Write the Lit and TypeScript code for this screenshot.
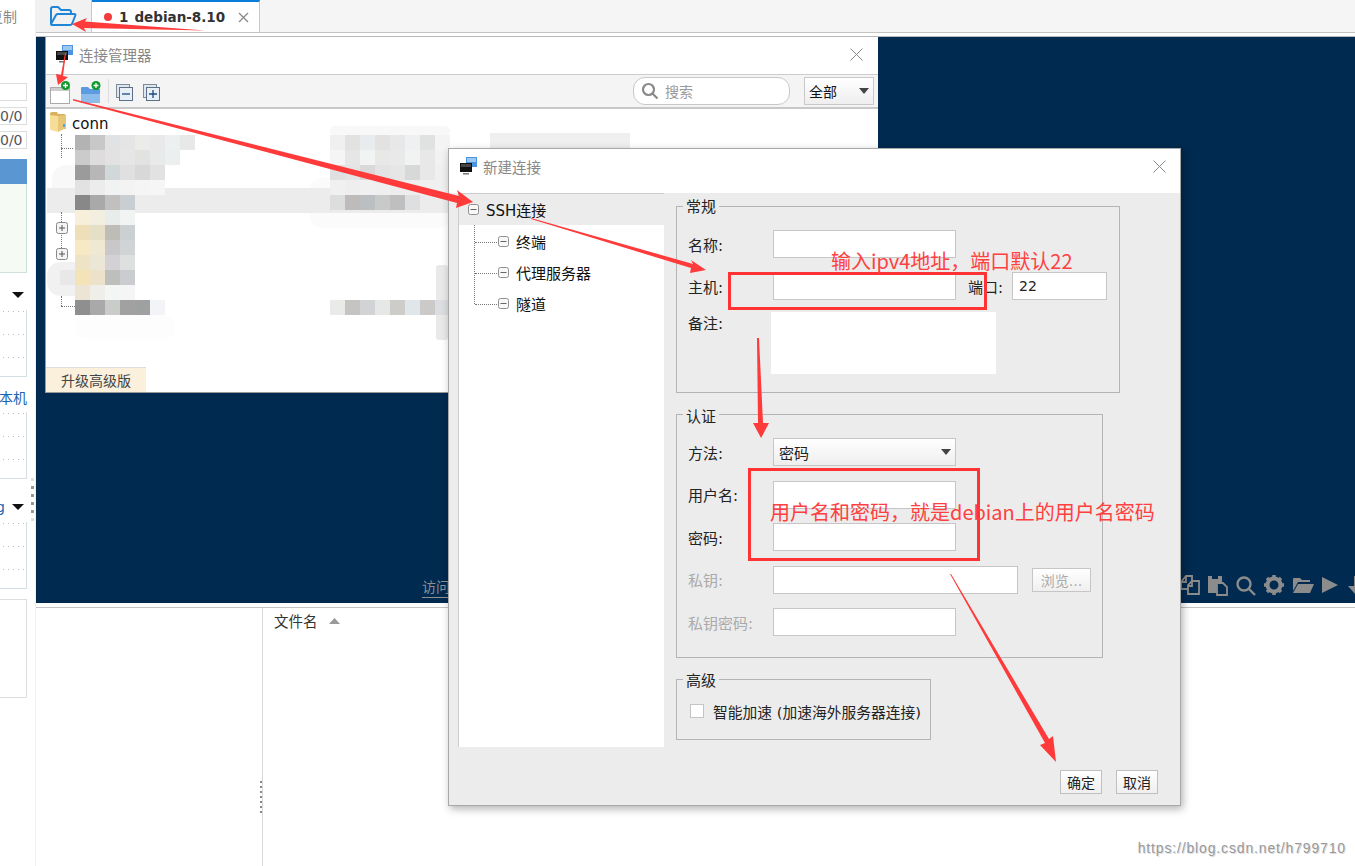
import { LitElement, html, css, svg } from "lit";
import { customElement } from "lit/decorators.js";

const L = [
  ["b3b3b3","c8c8c8","e0e2e3","e5e5e5","ebebe9","e9e9e9","ecf0f1","e8e8e8"],
  ["cbcbcb","dedcdd","e2e2e2","e6e6e6","e2e2e0","e8eaea","ecefef"],
  ["9b9b9b","b8b6b6","d2d7d9","e0e0e0","d8d8d8","e2e2e2"],
  ["e2e2e2","ececec","f1f3f3","f3f3f3","f5f5f5","f6f6f6"],
  ["888889","a9a9a9","c1c0bf","c8ced1"],
  ["f7efda","f3efe0","e8ecea","f2f3f3"],
  ["efdfb8","e6dfc8","bdbcb7","cbd0d2"],
  ["f6e9c4","efe8d3","c9c7c7","d0d4d5"],
  ["eee3c4","ebe6d6","d3d1d3","dee0df"],
  ["f4e3b7","ebe2c9","bdbfbd","cbccd0"],
  ["ece5d6","f0eee8","f4f6f6","f5f5f5"],
  ["8f8f90","a9a9a9","c9ccc9","a1a1a1","9fa1a1","f3f4f8"],
];
const R = [
  ["f0f0f0","e2e2e0","e9ecee","e3e2e0","e8e8e8","eef0f2","e0e2e2","f4f4f4"],
  ["f5f5f5","e6e6e6","f2f4f4","e8e8e6","e9e9e9","f1f3f3","e8e8e8","f2f2f2"],
  ["e0e0e2","e4e4e4","d9d9d9","e3e3e3","e6e6e6","d7d9d9","e8e8e8","f0f0f0"],
  ["f0f0f0","eeeeee","f0f0f0","efefef","ededed","eeeeee","f0f0f0","f0f0f0"],
  ["dcdddd","bebcbb","bbbfc2","c8c9c9","bfbfbf","dddfe0","ececec","ececec"],
  [], [], [], [], [], [],
  ["e9ebe9","c5c4c3","d2d3d4","e6e7e7","cdccc8","e0e6e9","cbcac8","dcdde0"],
];
const BLOBS: [number, number, number, number, string, number][] = [
  [52, 165, 30, 48, "f8f8f8", 14],
  [310, 178, 140, 50, "fbfbfb", 12],
  [47, 188, 401, 25, "ececec", 0],
  [47, 262, 40, 34, "f1f1f1", 14],
  [60, 270, 15, 15, "e8e8e8", 0],
  [436, 265, 12, 75, "e9e9e9", 3],
  [75, 315, 100, 24, "fdfdfd", 10],
  [330, 126, 120, 10, "f8f8f8", 6],
  [490, 133, 140, 15, "efefef", 0],
];

const monitor = svg`<svg class="mon" width="18" height="19" viewBox="0 0 18 19"><rect x="6" y="0" width="11" height="10" fill="#4d94e0"/><rect x="7" y="1" width="9" height="4" fill="#9cc8f2"/><rect x="0" y="6" width="12" height="9" fill="#111"/><rect x="1" y="7" width="10" height="3" fill="#444"/><rect x="3" y="16" width="6" height="1.5" fill="#777"/></svg>`;
const closeX = svg`<svg width="13" height="13" viewBox="0 0 13 13"><path d="M.5.5l12 12M12.5.5l-12 12" stroke="#8a8a8a" stroke-width="1" fill="none"/></svg>`;
const tabX = svg`<svg width="11" height="11" viewBox="0 0 11 11"><path d="M1 1l9 9M10 1l-9 9" stroke="#8a8a8a" stroke-width="1.300" fill="none"/></svg>`;
const caret = svg`<svg width="10" height="6" viewBox="0 0 10 6"><path d="M0 0h10L5 6z" fill="#444"/></svg>`;
const boxMinus = svg`<svg width="11" height="11" viewBox="0 0 11 11"><rect x=".5" y=".5" width="10" height="10" rx="2" fill="#f8f8f8" stroke="#8f8f8f"/><path d="M2.500 5.500h6" stroke="#666"/></svg>`;
const boxPlus = svg`<svg width="12" height="12" viewBox="0 0 12 12"><rect x=".5" y=".5" width="11" height="11" rx="2" fill="#f4f4f4" stroke="#888"/><path d="M3 6h6M6 3v6" stroke="#555"/></svg>`;

@customElement("app-root")
export class AppRoot extends LitElement {
  static styles = css`
    :host { display: block; position: relative; width: 1355px; height: 866px; overflow: hidden; background: #fff;
      font-family: "DejaVu Sans", "Noto Sans CJK SC", sans-serif; font-size: 14px; color: #222; }
    .shell { display: flex; height: 866px; }
    .side { width: 35px; flex: none; border-right: 1px solid #f0f0f0; position: relative; overflow: hidden; }
    .side-col { width: 27px; display: flex; flex-direction: column; position: relative; }
    .side-txt { height: 83px; padding: 6px 10px 0 0; color: #888; font-size: 14px; box-sizing: border-box; display: flex; justify-content: flex-end; white-space: nowrap; }
    .sbox { height: 18px; border: 1px solid #ddd; border-left: 0; box-sizing: border-box; margin-bottom: 6px; color: #555; font-size: 14px; text-align: right; line-height: 16px; padding-right: 4px; }
    .sblue { height: 25px; background: #5a96d2; margin-top: 4px; }
    .sgreen { height: 89px; background: #f5faf5; border: 1px solid #cfe0d8; border-left: 0; border-top: 0; box-sizing: border-box; }
    .shead { height: 37px; position: relative; color: #1a63b0; font-size: 14px; }
    .shead.b { height: 35px; padding-top: 10px; box-sizing: border-box; display: flex; justify-content: flex-end; white-space: nowrap; }
    .shead.c { height: 43px; }
    .gch { position: absolute; right: 22px; top: 20px; }
    .tri { position: absolute; left: 12px; top: 19px; width: 0; height: 0; border: 6px solid transparent; border-top: 6px solid #111; border-bottom: 0; }
    .shead.c .tri { top: 25px; }
    .spanel { height: 67px; border: 1px solid #d4dfe4; border-left: 0; border-top: 0; box-sizing: border-box;
      display: flex; flex-direction: column; gap: 22px; padding: 1px 2px 0 3px; }
    .dotrow { height: 1px; background: repeating-linear-gradient(90deg, #bbb 0 1px, transparent 1px 5px); }
    .sfree { height: 99px; border: 1px solid #ddd; border-left: 0; box-sizing: border-box; margin-top: 10px; }
    .sdots { position: absolute; left: 31px; top: 478px; display: flex; flex-direction: column; gap: 5px; }
    .sdots i { width: 3px; height: 3px; background: #999; display: block; }
    .sdots i.f { background: #e0e0e0; }

    .main { flex: 1; display: flex; flex-direction: column; min-width: 0; }
    .tabs { height: 33px; flex: none; display: flex; background: #f5f5f5; border-bottom: 1px solid #c4c4c4; box-sizing: border-box; }
    .fold { width: 56px; background: #f1f1f1; border-right: 1px solid #c8c8c8; display: flex; align-items: center; justify-content: center; box-sizing: border-box; padding-right: 2px; }
    .tab { width: 168px; height: 32px; background: #fff; border-top: 2px solid #0a7ddb; border-right: 1px solid #c8c8c8; box-sizing: border-box;
      display: flex; align-items: center; padding-left: 12px; font-weight: 700; font-size: 13.5px; color: #333; }
    .dot { width: 8px; height: 8px; border-radius: 50%; background: #f03c3c; margin-right: 7px; }
    .tab .nm { margin-left: 6px; }
    .tab .x { margin-left: 13px; display: flex; }
    .tgap { height: 3px; flex: none; }
    .term { height: 567px; flex: none; background: #002a50; border-top: 1px solid #b9b9b9; box-sizing: border-box; display: flex; align-items: flex-end; position: relative; }
    .visit { margin: 0 0 5px 386px; color: #8f8f8f; font-size: 14px; border-bottom: 1px solid #8f8f8f; line-height: 20px; height: 20px; width: 28px; }
    .ticons { margin: 0 0 6px auto; display: flex; align-items: center; gap: 8px; width: 175px; flex: none; overflow: hidden; height: 24px; }
    .ticons svg { flex: none; }
    .lower { flex: 1; border-top: 1px solid #c4c4c4; margin-top: 4px; display: flex; position: relative; }
    .lp { width: 226px; border-right: 1px solid #d8d8d8; flex: none; }
    .fhead { padding: 4px 0 0 11px; display: flex; gap: 11px; align-items: flex-start; font-size: 14.5px; color: #333; line-height: 20px; }
    .fhead svg { margin-top: 6px; }
    .ldots { position: absolute; left: 224px; top: 173px; display: flex; flex-direction: column; gap: 3px; }
    .ldots i { width: 2px; height: 2px; background: #888; display: block; }
    .wm { position: absolute; right: 9px; bottom: 10px; color: #999; font-size: 14px; font-family: "Liberation Sans", sans-serif; letter-spacing: .85px; text-shadow: 1px 1px 0 #ddd; }

    .win { position: absolute; background: #fff; box-sizing: border-box; display: flex; flex-direction: column; }
    .conn { left: 45px; top: 37px; width: 833px; height: 356px; border: 1px solid #9a9a9a; border-top: 0; border-right: 0; }
    .tbar { flex: none; display: flex; align-items: center; color: #888; font-size: 14.5px; padding-left: 11px; gap: 5px; }
    .conn .tbar { height: 37px; padding: 0 0 2px 10px; gap: 5px; box-sizing: border-box; }
    .tbar .cl { margin-left: auto; display: flex; }
    .conn .cl { margin-right: 15px; }
    .tool { height: 35px; flex: none; box-sizing: border-box; background: #f4f4f4; border-top: 1px solid #ccc; border-bottom: 2px solid #c8c8c8; display: flex; align-items: center; padding-left: 4px; }
    .tool .sep { width: 1px; height: 24px; background: #ddd; margin: 0 7px 0 6px; }
    .tool .ic { margin-top: 4px; flex: none; }
    .tool .m8 { margin-left: 8px; }
    .tool .m9 { margin-left: 9px; }
    .pill { margin-left: auto; width: 157px; height: 28px; background: #fff; border: 1px solid #c8c8c8; border-radius: 12px; box-sizing: border-box; display: flex; align-items: center; padding-left: 7px; gap: 6px; color: #999; }
    .sel { width: 70px; height: 28px; margin: 0 4px 0 14px; border: 1px solid #c8c8c8; box-sizing: border-box; background: linear-gradient(#fff, #eee); display: flex; align-items: center; justify-content: space-between; padding: 0 4px; color: #111; }
    .ctree { flex: 1; position: relative; min-height: 0; }
    .croot { position: absolute; left: 4px; top: 3px; display: flex; align-items: center; gap: 6px; font-size: 15px; color: #111; }
    .croot span { padding-top: 3px; }
    .mos { position: absolute; display: grid; grid-template-columns: repeat(8, 15px); grid-auto-rows: 15px; }
    .blob { position: absolute; }
    .vdot { position: absolute; border-left: 1px dotted #777; width: 0; }
    .hdot { position: absolute; border-top: 1px dotted #777; height: 0; }
    .cplus { position: absolute; display: flex; }
    .up { position: absolute; left: 0; bottom: 0; width: 100px; height: 25px; background: #faf0dc; border-top: 1px solid #ddd; box-sizing: border-box; display: flex; align-items: center; justify-content: center; font-size: 14px; color: #444; }

    .dlg { left: 448px; top: 148px; width: 733px; height: 658px; background: #ececec; border: 1px solid #a8a8a8; box-shadow: 2px 3px 8px rgba(0,0,0,.3); }
    .dlg .tbar { height: 44px; background: #fff; padding-bottom: 9px; box-sizing: border-box; }
    .dlg .cl { margin-right: 14px; }
    .dbody { flex: 1; display: flex; padding-left: 9px; min-height: 0; }
    .ttree { width: 206px; height: 554px; background: #fff; border-left: 1px solid #ccc; border-top: 1px solid #ccc; box-sizing: border-box; flex: none; position: relative; font-size: 15px; color: #111; }
    .trow { height: 31px; display: flex; align-items: center; gap: 7px; padding-left: 39px; box-sizing: border-box; }
    .trow.sel0 { background: #ececec; padding-left: 9px; margin-bottom: 1px; }
    .dcol { flex: 1; padding: 13px 0 0 12px; display: flex; flex-direction: column; gap: 21px; min-width: 0; }
    .grp { border: 1px solid #b4b4b4; box-sizing: border-box; padding: 23px 0 0 11px; position: relative; display: flex; flex-direction: column; }
    .lg { position: absolute; left: 6px; top: -9px; background: #ececec; padding: 0 3px; font-size: 15px; line-height: 18px; color: #222; }
    .g1 { width: 444px; height: 187px; gap: 14px; }
    .g1 .top { margin-top: -2px; }
    .g2 { width: 427px; height: 244px; gap: 14.5px; }
    .g2 .lg { top: -7px; }
    .g3 { width: 255px; height: 61px; padding-top: 23px; }
    .g3 .lg { top: -8px; }
    .row { display: flex; align-items: center; height: 28px; flex: none; }
    .row.top { align-items: flex-start; height: 62px; }
    .lb { width: 85px; flex: none; font-size: 15px; color: #222; }
    .off .lb { color: #aaa; }
    .ip { height: 28px; width: 183px; background: #fff; border: 1px solid #c6c6c6; box-sizing: border-box; flex: none; }
    .ip.w245 { width: 245px; }
    .port { width: 95px; display: flex; align-items: center; padding-left: 6px; font-size: 14px; color: #222; }
    .plb { margin-left: 12px; width: 44px; flex: none; }
    .memo { width: 225px; height: 62px; background: #fff; margin-left: -2px; flex: none; }
    .msel { background: linear-gradient(#fff, #eee); display: flex; align-items: center; justify-content: space-between; padding: 0 4px 0 5px; color: #222; font-size: 15px; }
    .bro { margin-left: 14px; width: 59px; height: 24px; border: 1px solid #c6c6c6; box-sizing: border-box; background: linear-gradient(#fff, #efefef); color: #aaa; font-size: 14px; display: flex; align-items: center; justify-content: center; flex: none; }
    .ck { display: flex; align-items: center; gap: 9px; font-size: 14.75px; color: #222; margin: 0 0 0 2px; height: 16px; white-space: nowrap; }
    .box { width: 14px; height: 14px; background: #fff; border: 1px solid #c4c4c4; box-sizing: border-box; flex: none; }
    .btns { display: flex; justify-content: flex-end; gap: 14px; padding-right: 22px; margin-top: 9px; }
    .btn { width: 42px; height: 24px; border: 1px solid #c0c0c0; box-sizing: border-box; background: linear-gradient(#fff, #efefef); display: flex; align-items: center; justify-content: center; font-size: 14px; color: #222; }

    .anno { position: absolute; left: 0; top: 0; pointer-events: none; }
    .note { position: absolute; color: #ff4040; font-family: "Noto Sans CJK SC", sans-serif; font-size: 20px; line-height: 26px; white-space: nowrap; }
    .n1 { left: 831px; top: 248px; }
    .n2 { left: 770px; top: 499px; }
    .mon { flex: none; }
  `;

  private mosaic(rows: string[][], x: number, y: number) {
    return html`<div class="mos" style="left:${x}px;top:${y}px">
      ${rows.map((r) => Array.from({ length: 8 }, (_, i) =>
        html`<div style="background:${r[i] ? "#" + r[i] : "transparent"}"></div>`))}
    </div>`;
  }

  render() {
    // conn tree origin is at page (46,109)
    const ox = 46, oy = 109;
    const dots = html`<div class="spanel"><div class="dotrow"></div><div class="dotrow"></div><div class="dotrow"></div></div>`;
    return html`
      <div class="shell">
        <aside class="side">
          <div class="side-col">
            <div class="side-txt">复制</div>
            <div class="sbox"></div>
            <div class="sbox">0/0</div>
            <div class="sbox">0/0</div>
            <div class="sblue"></div>
            <div class="sgreen"></div>
            <div class="shead"><span class="tri"></span></div>
            ${dots}
            <div class="shead b">本机</div>
            ${dots}
            <div class="shead c"><span class="gch">g</span><span class="tri"></span></div>
            ${dots}
            <div class="sfree"></div>
          </div>
          <div class="sdots"><i class="f"></i><i></i><i></i><i></i><i></i><i class="f"></i></div>
        </aside>
        <div class="main">
          <div class="tabs">
            <div class="fold">
              <svg width="28" height="22" viewBox="0 0 28 22"><path d="M2 19V4q0-2 2-2h5l3 3h8q2 0 2 2v2M2 19l5-9q.6-1 2-1h16q2 0 1.300 1.500L23 19q-.6 1-2 1H3q-1 0-1-1z" fill="none" stroke="#1f85d8" stroke-width="2" stroke-linejoin="round"/></svg>
            </div>
            <div class="tab"><span class="dot"></span>1<span class="nm">debian-8.10</span><span class="x">${tabX}</span></div>
          </div>
          <div class="tgap"></div>
          <div class="term">
            <span class="visit">访问</span>
            <div class="ticons">
              <svg width="20" height="22" viewBox="0 0 20 22" fill="none" stroke="#8c8c8c" stroke-width="1.800"><path d="M8 15H1V8l5-6h6v5"/><path d="M6 2v6H1"/><path d="M8 20V11l4-4h7v13z"/><path d="M12 7v5H8"/></svg>
              <svg width="20" height="22" viewBox="0 0 20 22"><path d="M0 2h14v8H9v9H0z" fill="#8c8c8c"/><path d="M4 2h6v3H4z" fill="#002a50"/><path d="M9 9h6l4 4v8H9z" fill="#002a50" stroke="#8c8c8c" stroke-width="1.800"/></svg>
              <svg width="20" height="22" viewBox="0 0 20 22" fill="none" stroke="#8c8c8c" stroke-width="2.400"><circle cx="8" cy="10" r="6.500"/><path d="M13 15l6 6"/></svg>
              <svg width="20" height="22" viewBox="0 0 20 22"><circle cx="10" cy="11" r="6.500" fill="none" stroke="#8c8c8c" stroke-width="4"/><path d="M10 1v4M10 17v4M0 11h4M16 11h4M3 4l3 3M14 15l3 3M17 4l-3 3M6 15l-3 3" stroke="#8c8c8c" stroke-width="3.500"/></svg>
              <svg width="22" height="22" viewBox="0 0 22 22"><path d="M1 5q0-1 1-1h6l2 2h8v2H6L1 17z" fill="#8c8c8c"/><path d="M6 10h16l-4 9H1z" fill="#8c8c8c"/></svg>
              <svg width="17" height="22" viewBox="0 0 17 22"><path d="M0 3l16 8-16 8z" fill="#8c8c8c"/></svg>
              <svg width="16" height="22" viewBox="0 0 16 22"><path d="M7 2h4v10h4l-7 8-7-8h6z" fill="#8c8c8c"/></svg>
            </div>
          </div>
          <div class="lower">
            <div class="lp"></div>
            <div class="fhead">文件名<svg width="11" height="6" viewBox="0 0 11 6"><path d="M0 6l5.500-6L11 6z" fill="#999"/></svg></div>
            <div class="ldots">${Array.from({ length: 7 }, () => html`<i></i>`)}</div>
            <div class="wm">https://blog.csdn.net/h799710</div>
          </div>
        </div>
      </div>

      <section class="win conn">
        <div class="tbar">${monitor}<span>连接管理器</span><span class="cl">${closeX}</span></div>
        <div class="tool">
          <svg class="ic" width="22" height="24" viewBox="0 0 22 24"><rect x=".5" y="6.500" width="19" height="16" fill="#fff" stroke="#aaa"/><rect x="1" y="7" width="18" height="3" fill="#ccc"/><circle cx="15.500" cy="4.500" r="4.500" fill="#0e9a2a"/><path d="M13 4.500h5M15.500 2v5" stroke="#fff" stroke-width="1.300"/></svg>
          <svg class="ic m8" width="22" height="24" viewBox="0 0 22 24"><path d="M1 7q0-1 1-1h6l2 2h10v14H1z" fill="#5b9be0"/><path d="M1 13h19v9H1z" fill="#8cbcec"/><circle cx="16" cy="4.500" r="4.500" fill="#0e9a2a"/><path d="M13.500 4.500h5M16 2v5" stroke="#fff" stroke-width="1.300"/></svg>
          <span class="sep"></span>
          <svg class="ic" width="18" height="18" viewBox="0 0 18 18"><rect x=".5" y=".5" width="13" height="13" fill="#dfe6ee" stroke="#7c8a9a"/><rect x="3.500" y="3.500" width="13" height="13" fill="#e8eff6" stroke="#5c7088"/><path d="M6 10h8" stroke="#1c4a80" stroke-width="1.300"/></svg>
          <svg class="ic m9" width="18" height="18" viewBox="0 0 18 18"><rect x=".5" y=".5" width="13" height="13" fill="#dfe6ee" stroke="#7c8a9a"/><rect x="3.500" y="3.500" width="13" height="13" fill="#e8eff6" stroke="#5c7088"/><path d="M6 10h8M10 6v8" stroke="#1c4a80" stroke-width="1.300"/></svg>
          <div class="pill">
            <svg width="18" height="18" viewBox="0 0 18 18" fill="none" stroke="#8a8a8a" stroke-width="2.200"><circle cx="7.500" cy="7.500" r="5.500"/><path d="M11.500 11.500l5 5"/></svg>
            <span>搜索</span>
          </div>
          <div class="sel"><span>全部</span>${caret}</div>
        </div>
        <div class="ctree">
          ${BLOBS.map(([x, y, w, h, c, r]) => html`<div class="blob" style="left:${x - ox}px;top:${y - oy}px;width:${w}px;height:${h}px;background:#${c};border-radius:${r}px"></div>`)}
          ${this.mosaic(L, 75 - ox, 135 - oy)}
          ${this.mosaic(R, 330 - ox, 135 - oy)}
          <div class="croot">
            <svg width="16" height="21" viewBox="0 0 16 21"><path d="M0 2q0-2 2-2h5l1 2h6q2 0 2 2v13H1q-1 0-1-1z" fill="#d9b15c"/><path d="M0 3l8 1v16l-7-2q-1 0-1-1z" fill="#f6dd98"/><path d="M8 4l8-1v13l-8 4z" fill="#e8c678"/><rect x="13" y="12" width="2" height="3" fill="#55a5d8"/></svg>
            <span>conn</span>
          </div>
          <div class="vdot" style="left:${61 - ox}px;top:${134 - oy}px;height:24px"></div>
          <div class="hdot" style="left:${61 - ox}px;top:${148 - oy}px;width:12px"></div>
          <div class="vdot" style="left:${61 - ox}px;top:${212 - oy}px;height:48px"></div>
          <div class="vdot" style="left:${61 - ox}px;top:${296 - oy}px;height:10px"></div>
          <div class="hdot" style="left:${61 - ox}px;top:${306 - oy}px;width:14px"></div>
          <div class="cplus" style="left:${56 - ox}px;top:${222 - oy}px">${boxPlus}</div>
          <div class="cplus" style="left:${56 - ox}px;top:${248 - oy}px">${boxPlus}</div>
          <div class="up">升级高级版</div>
        </div>
      </section>

      <section class="win dlg">
        <div class="tbar">${monitor}<span>新建连接</span><span class="cl">${closeX}</span></div>
        <div class="dbody">
          <div class="ttree">
            <div class="trow sel0">${boxMinus}<span>SSH连接</span></div>
            <div class="trow">${boxMinus}<span>终端</span></div>
            <div class="trow">${boxMinus}<span>代理服务器</span></div>
            <div class="trow">${boxMinus}<span>隧道</span></div>
            <div class="vdot" style="left:15px;top:31px;height:79px"></div>
            <div class="hdot" style="left:16px;top:48px;width:22px"></div>
            <div class="hdot" style="left:16px;top:79px;width:22px"></div>
            <div class="hdot" style="left:16px;top:110px;width:22px"></div>
          </div>
          <div class="dcol">
            <div class="grp g1">
              <span class="lg">常规</span>
              <div class="row"><span class="lb">名称:</span><div class="ip"></div></div>
              <div class="row"><span class="lb">主机:</span><div class="ip"></div><span class="lb plb">端口:</span><div class="ip port">22</div></div>
              <div class="row top"><span class="lb">备注:</span><div class="memo"></div></div>
            </div>
            <div class="grp g2">
              <span class="lg">认证</span>
              <div class="row"><span class="lb">方法:</span><div class="ip msel"><span>密码</span>${caret}</div></div>
              <div class="row"><span class="lb">用户名:</span><div class="ip"></div></div>
              <div class="row"><span class="lb">密码:</span><div class="ip"></div></div>
              <div class="row off"><span class="lb">私钥:</span><div class="ip w245"></div><div class="bro">浏览...</div></div>
              <div class="row off"><span class="lb">私钥密码:</span><div class="ip"></div></div>
            </div>
            <div class="grp g3">
              <span class="lg">高级</span>
              <div class="ck"><span class="box"></span><span>智能加速 (加速海外服务器连接)</span></div>
            </div>
            <div class="btns"><div class="btn">确定</div><div class="btn">取消</div></div>
          </div>
        </div>
      </section>

      <svg class="anno" width="1355" height="866" viewBox="0 0 1355 866">
        <g fill="#ff3a3a">
          <path d="M72 24L87 18 85 21.500 205 30.500 84 28 86 32z"/>
          <path d="M58 85L56 74 61 75 65 53 66 53 63 76 68 77z"/>
          <path d="M473 202L457 190 459 196 73 99 73 100.500 457 203 456 208z"/>
          <path d="M706 270L691 260 693 264 531 218 531 219 691 268 690 273z"/>
          <path d="M761 438L753 423 758 423 757 338 759 338 763 423 769 423z"/>
          <path d="M1056 762L1040 745 1045 743 950 574 951 574 1049 739 1053 736z"/>
        </g>
        <rect x="729.500" y="273.500" width="256" height="35" fill="none" stroke="#f33" stroke-width="3"/>
        <rect x="749.500" y="469.500" width="229" height="90" fill="none" stroke="#f33" stroke-width="3"/>
      </svg>
      <div class="note n1">输入ipv4地址\uFF0C端口默认22</div>
      <div class="note n2">用户名和密码\uFF0C就是debian上的用户名密码</div>
    `;
  }
}
